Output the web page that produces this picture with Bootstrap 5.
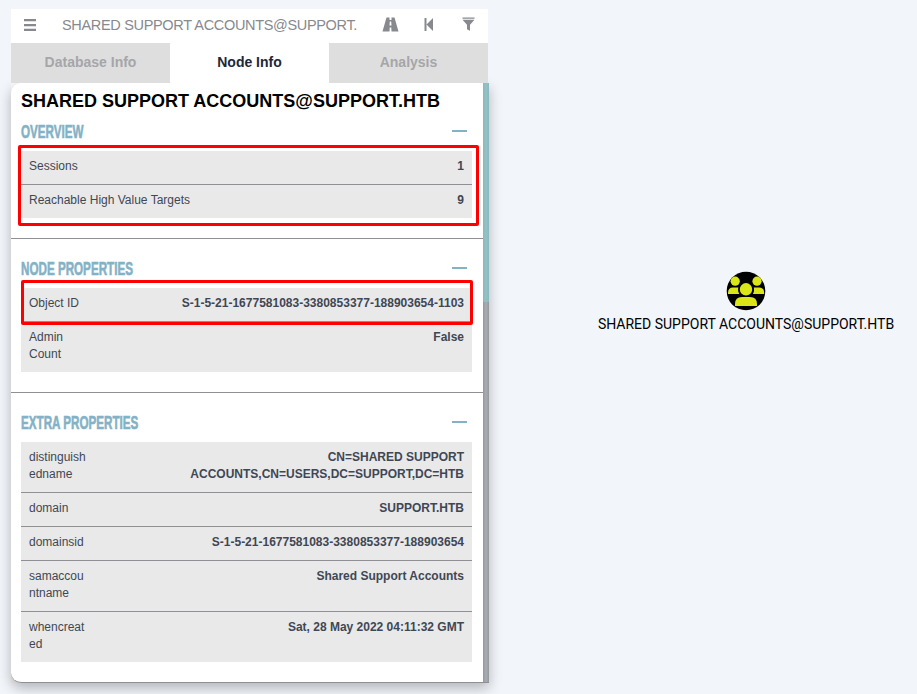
<!DOCTYPE html>
<html lang="en">
<head>
<meta charset="utf-8">
<title>Node Info</title>
<link rel="stylesheet" href="https://cdn.jsdelivr.net/npm/bootstrap@5.3.0/dist/css/bootstrap.min.css">
<style>
body{background:#f2f5fa;font-family:"Liberation Sans",Arial,sans-serif;height:694px;overflow:hidden;color:#3f4754}
.side{width:478px;margin:9px 0 0 11px}
.topbar{height:34px;width:477px;background:#fff;color:#87898f;padding-bottom:3px}
.topbar .menu-icon{margin-left:13px}
.topbar .query{font-size:14.5px;letter-spacing:-.33px;width:298px;margin-left:26px;white-space:nowrap;line-height:20px}
.topbar .tools{margin-left:20px}
.tabs{width:477px;height:40px;background:#dedede}
.tabs .tab{background:#dedede;color:#a5a6a9;font-size:14px;font-weight:700;line-height:38px}
.tabs .tab.current{background:#fff;color:#202838}
.panel-wrap{background:linear-gradient(#fafafa,#f0f1f2)}
.panel{height:600px;background:#fff;border-bottom:1px solid #8e9096;border-radius:10px 0 0 10px;box-shadow:0 5px 13px rgba(0,0,0,.27)}
.track{width:6px;background:linear-gradient(90deg,#95979d,#a9adb2 50%,#95979d)}
.thumb{height:219px;background:linear-gradient(90deg,#8ab8bd,#93c2c7 50%,#8ab8bd)}
.name{font-size:18px;font-weight:700;color:#000;line-height:20px;padding:8px 0 0 10px;height:32px;white-space:nowrap}
.sec{padding:13px 11px 20px 10px;border-bottom:1px solid #8e9096}
.sec.first{padding-top:0}
.sec:last-child{border-bottom:0}
.sec-head{height:36px;color:#83b1c6}
.sec-head .label{font-size:18.3px;font-weight:700;line-height:34px;transform:scaleX(.637);transform-origin:0 50%;white-space:nowrap;-webkit-text-stroke:.6px #83b1c6}
.dash{width:15px;height:2px;background:#83b1c6;margin:15px 5px 0 0}
.rows{background:#e9e9e9;font-size:12px;line-height:17px}
.rows>div{padding:7px 8px 9px;border-bottom:1px solid #8e9096}
.rows>div:last-child{border-bottom:0}
.rows b{text-align:right;white-space:nowrap}
.mark-box{position:absolute;border:3px solid #f00;border-radius:2px}
.mark-a{left:18px;top:145px;width:461px;height:81px}
.mark-b{left:21px;top:280px;width:452px;height:45px}
.node{position:absolute;left:598px;top:271px;width:296px;font-family:Roboto,sans-serif;font-size:14px;color:#000;white-space:nowrap}
.node .cap{line-height:20px;margin-top:3px}
</style>
<script src="https://cdn.jsdelivr.net/npm/bootstrap@5.3.0/dist/js/bootstrap.bundle.min.js"></script>
</head>
<body class="position-relative">
<div class="side float-start">
  <div class="topbar d-flex align-items-center">
    <svg class="menu-icon" width="12" height="12" fill="#87898f"><path d="M0 0h12v2.300H0zM0 4.900h12v2.300H0zM0 9.700h12V12H0z"/></svg>
    <div class="query">SHARED SUPPORT ACCOUNTS@SUPPORT.</div>
    <svg class="tools" width="106" height="16" viewBox="380 17 106 16" fill="#87898f"><path d="M386.500 17.500h3v2.500h2v-2.500h3l4 14h-7l-.2-4h-1.600l-.2 4h-7zM389.800 21.500l-.3 4h2l-.3-4zM424.500 18h2v13h-2zM433 18v13l-6.500-6.500zM462.500 17.500h12v1.300h-12zM462.500 19.800h12l-4.500 5v6l-3-1.500v-4.500z"/></svg>
  </div>
  <div class="tabs d-flex text-center">
    <div class="tab flex-fill w-100">Database Info</div><div class="tab current flex-fill w-100">Node Info</div><div class="tab flex-fill w-100">Analysis</div>
  </div>
  <div class="panel-wrap">
  <div class="panel d-flex">
    <div class="flex-grow-1">
      <div class="name">SHARED SUPPORT ACCOUNTS@SUPPORT.HTB</div>
      <section class="sec first">
        <div class="sec-head d-flex justify-content-between"><span class="label">OVERVIEW</span><span class="dash"></span></div>
        <div class="rows">
          <div class="d-flex justify-content-between"><span>Sessions</span><b>1</b></div>
          <div class="d-flex justify-content-between"><span>Reachable High Value Targets</span><b>9</b></div>
        </div>
      </section>
      <section class="sec">
        <div class="sec-head d-flex justify-content-between"><span class="label">NODE PROPERTIES</span><span class="dash"></span></div>
        <div class="rows">
          <div class="d-flex justify-content-between"><span>Object ID</span><b>S-1-5-21-1677581083-3380853377-188903654-1103</b></div>
          <div class="d-flex justify-content-between"><span>Admin<br>Count</span><b>False</b></div>
        </div>
      </section>
      <section class="sec">
        <div class="sec-head d-flex justify-content-between"><span class="label">EXTRA PROPERTIES</span><span class="dash"></span></div>
        <div class="rows">
          <div class="d-flex justify-content-between"><span>distinguish<br>edname</span><b>CN=SHARED SUPPORT<br>ACCOUNTS,CN=USERS,DC=SUPPORT,DC=HTB</b></div>
          <div class="d-flex justify-content-between"><span>domain</span><b>SUPPORT.HTB</b></div>
          <div class="d-flex justify-content-between"><span>domainsid</span><b>S-1-5-21-1677581083-3380853377-188903654</b></div>
          <div class="d-flex justify-content-between"><span>samaccou<br>ntname</span><b>Shared Support Accounts</b></div>
          <div class="d-flex justify-content-between"><span>whencreat<br>ed</span><b>Sat, 28 May 2022 04:11:32 GMT</b></div>
        </div>
      </section>
    </div>
    <div class="track"><div class="thumb"></div></div>
  </div>
  </div>
</div>
<div class="mark-box mark-a"></div>
<div class="mark-box mark-b"></div>
<div class="node d-flex flex-column align-items-center">
  <svg width="40" height="40" viewBox="0 0 40 40"><circle cx="20" cy="20" r="19.300"/><g fill="#dbe616"><circle cx="9.200" cy="10.200" r="4.600"/><circle cx="31" cy="10.200" r="4.600"/><path d="M2 23v-1q0-5.500 5-5.500h5.500q-1 3.500.8 6.500zM38.200 23v-1q0-5.500-5-5.500h-5.500q1 3.500-.8 6.500z"/><circle cx="20" cy="18.300" r="6.900" stroke="#000" stroke-width="1.400"/><path d="M9 35v-2q0-7 7-7h8q7 0 7 7v2z"/></g></svg>
  <div class="cap">SHARED SUPPORT ACCOUNTS@SUPPORT.HTB</div>
</div>
</body>
</html>
